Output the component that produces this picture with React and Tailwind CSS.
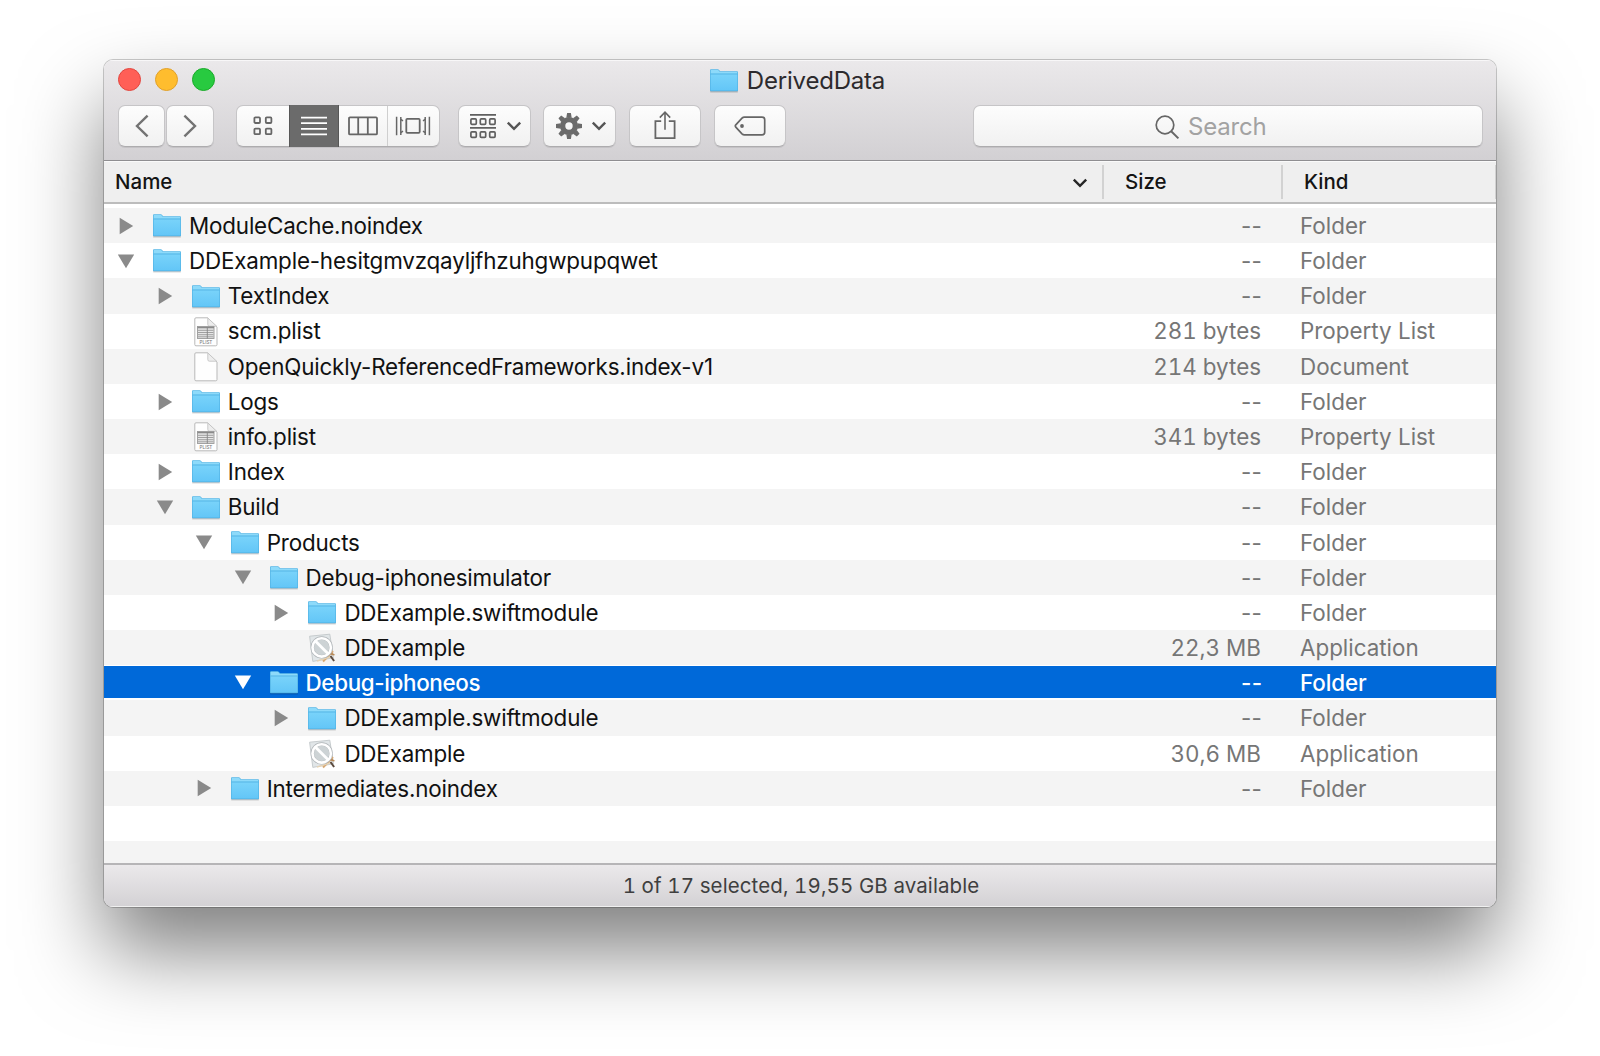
import React from 'react';
import clsx from 'clsx';

const ROWS = [
  { name: 'ModuleCache.noindex', depth: 0, type: 'folder', open: false },
  { name: 'DDExample-hesitgmvzqayljfhzuhgwpupqwet', depth: 0, type: 'folder', open: true },
  { name: 'TextIndex', depth: 1, type: 'folder', open: false },
  { name: 'scm.plist', depth: 1, type: 'plist', size: '281 bytes', kind: 'Property List' },
  { name: 'OpenQuickly-ReferencedFrameworks.index-v1', depth: 1, type: 'document', size: '214 bytes', kind: 'Document' },
  { name: 'Logs', depth: 1, type: 'folder', open: false },
  { name: 'info.plist', depth: 1, type: 'plist', size: '341 bytes', kind: 'Property List' },
  { name: 'Index', depth: 1, type: 'folder', open: false },
  { name: 'Build', depth: 1, type: 'folder', open: true },
  { name: 'Products', depth: 2, type: 'folder', open: true },
  { name: 'Debug-iphonesimulator', depth: 3, type: 'folder', open: true },
  { name: 'DDExample.swiftmodule', depth: 4, type: 'folder', open: false },
  { name: 'DDExample', depth: 4, type: 'app', size: '22,3 MB', kind: 'Application' },
  { name: 'Debug-iphoneos', depth: 3, type: 'folder', open: true, selected: true },
  { name: 'DDExample.swiftmodule', depth: 4, type: 'folder', open: false },
  { name: 'DDExample', depth: 4, type: 'app', size: '30,6 MB', kind: 'Application' },
  { name: 'Intermediates.noindex', depth: 2, type: 'folder', open: false },
];

const INDENT = 38.85;

const FolderIcon = () => (
  <svg width="30" height="26" viewBox="0 0 30 26" className="shrink-0">
    <defs>
      <linearGradient id="folder-front" x1="0" y1="0" x2="0" y2="1">
        <stop offset="0" stopColor="#79d3fa" />
        <stop offset="1" stopColor="#63c6f7" />
      </linearGradient>
    </defs>
    <path d="M1.2 23.6h27.6" stroke="#000" strokeOpacity="0.2" strokeWidth="1.6" />
    <path d="M1 2.2Q1 1.2 2 1.2h6.6q.8 0 1.3.6l.8.9q.5.5 1.2.5H28q1 0 1 1V22.5q0 .8-.8.8H1.8q-.8 0-.8-.8z" fill="#4fb0e2" />
    <path d="M1.6 2.4q0-.6.6-.6h6.3q.6 0 1 .5l.8.9q.5.6 1.3.6h16q.8 0 .8.8v1.2H1.6z" fill="#8ddafa" />
    <path d="M1.6 6.2h26.8v15.8q0 .5-.5.5H2.1q-.5 0-.5-.5z" fill="url(#folder-front)" />
    <path d="M1.5 5.9h27" stroke="#5cbbea" strokeWidth="0.8" />
  </svg>
);

const Page = ({ children }) => (
  <svg width="30" height="30" viewBox="0 0 30 30" className="shrink-0">
    <path d="M5 .8h11.8L26 10v17.6q0 1.2-1.2 1.2H5q-1.2 0-1.2-1.2V2Q3.8.8 5 .8z" fill="#fefefe" stroke="#b9b9b9" />
    <path d="M16.8 1v6.6q0 1.6 1.6 1.6h7.3z" fill="#ededed" stroke="#c4c4c4" strokeWidth="0.9" />
    {children}
  </svg>
);

const PlistIcon = () => (
  <Page>
    <rect x="6.5" y="9.5" width="16.5" height="12" fill="#e6e6e6" stroke="#9a9a9a" strokeWidth="0.9" />
    <path d="M6.5 10.6h16.5" stroke="#8a8a8a" strokeWidth="1.4" />
    <path d="M7 13.3h15.5M7 15.5h15.5M7 17.7h15.5M7 19.8h15.5" stroke="#a0a0a0" strokeWidth="1" />
    <path d="M16.3 10v11.5" stroke="#868686" strokeWidth="0.9" />
    <text x="15" y="27.2" textAnchor="middle" fontSize="4.6" fontWeight="500" fontFamily="Inter, sans-serif" fill="#7e7e7e">PLIST</text>
  </Page>
);

const AppIcon = () => (
  <svg width="30" height="30" viewBox="0 0 30 30" className="shrink-0">
    <path d="M2.6 3.2 22.8 1.2l3.6 23.6-20.6 3.6z" fill="#e1e6e8" stroke="#c2c7c9" strokeWidth="0.9" />
    <path d="M16 28.5 26 18" stroke="#d7a872" strokeWidth="2" />
    <path d="m10 28.2 14-4.5" stroke="#e6d3b4" strokeWidth="1.4" />
    <path d="m20.5 20.5 4.7-.7 3 2.2-2 .6" fill="#b98b5a" />
    <path d="m23.5 23 3.6 5" stroke="#5b4a3e" strokeWidth="2" />
    <circle cx="14.7" cy="14.4" r="9.4" fill="#c6cccf" fillOpacity="0.75" stroke="#b0b5b8" strokeWidth="3.4" />
    <circle cx="14.7" cy="14.4" r="9.2" fill="none" stroke="#fff" strokeWidth="2.6" />
    <path d="m8.3 8 12.8 12.8" stroke="#fff" strokeWidth="2.8" />
  </svg>
);

const ICONS = {
  folder: FolderIcon,
  plist: PlistIcon,
  document: Page,
  app: AppIcon,
};

const Disclosure = ({ open }) => (
  <svg width="18" height="18" viewBox="0 0 18 18" fill="currentColor" className="-mt-px">
    {open ? <path d="M.8 2.6h16.4L9 16.2z" /> : <path d="M2.7 .8 16.2 9 2.7 17.2z" />}
  </svg>
);

const Chevron = ({ className, width = 2.4 }) => (
  <svg width="16" height="10" viewBox="0 0 16 10" fill="none" stroke="currentColor" strokeWidth={width} className={className}>
    <path d="M1.8 1.6 8 7.8l6.2-6.2" />
  </svg>
);

const Gear = () => (
  <svg width="26" height="26" viewBox="-13 -13 26 26" fill="#6b6b6b">
    <circle r="6.4" fill="none" stroke="#6b6b6b" strokeWidth="5.4" />
    {[0, 45, 90, 135, 180, 225, 270, 315].map(angle => (
      <path key={angle} d="M-2.7-8.3-1.9-13h3.8l.8 4.7z" transform={`rotate(${angle})`} />
    ))}
  </svg>
);

const ToolButton = ({ className, children }) => (
  <button
    className={clsx(
      'flex h-[42px] shrink-0 items-center rounded-[7px] border border-[#c6c5c7] border-b-[#adacae] bg-linear-to-b from-[#fdfdfd] to-[#f1f1f1] shadow-[0_1px_0_rgba(0,0,0,0.08)]',
      className
    )}
  >
    {children}
  </button>
);

const ViewSwitcher = () => (
  <div className="ml-[22px] flex h-[42px] w-[204px] shrink-0 rounded-[7px] border border-[#c6c5c7] border-b-[#adacae] bg-linear-to-b from-[#fdfdfd] to-[#f1f1f1] text-[#666] shadow-[0_1px_0_rgba(0,0,0,0.08)]">
    <div className="flex w-[52px] items-center justify-center">
      <svg width="20" height="20" viewBox="0 0 20 20" fill="none" stroke="currentColor" strokeWidth="1.8">
        <rect x="1.4" y="1.4" width="5.6" height="5.6" rx="1" />
        <rect x="12.8" y="1.4" width="5.6" height="5.6" rx="1" />
        <rect x="1.4" y="12.6" width="5.6" height="5.6" rx="1" />
        <rect x="12.8" y="12.6" width="5.6" height="5.6" rx="1" />
      </svg>
    </div>
    <div className="-my-px flex w-[50px] items-center justify-center border-x border-[#575757] bg-[#6b6b6b]">
      <svg width="26" height="20" viewBox="0 0 26 20" stroke="#fff" strokeWidth="1.8" className="-ml-px">
        <path d="M0 1.6h26M0 7.1h26M0 12.8h26M0 18.3h26" />
      </svg>
    </div>
    <div className="flex w-[49px] items-center justify-center border-r border-[#cfcfcf]">
      <svg width="30" height="20" viewBox="0 0 30 20" fill="none" stroke="currentColor" strokeWidth="1.8">
        <rect x="1" y="1.4" width="28" height="17" rx="1" />
        <path d="M10.2 1.4v17M19.8 1.4v17" />
      </svg>
    </div>
    <div className="flex flex-1 items-center justify-center">
      <svg width="36" height="20" viewBox="0 0 36 20" fill="none" stroke="currentColor" strokeWidth="1.5" className="-ml-0.5">
        <rect x="11.3" y="2.8" width="13.4" height="14" rx="1" strokeWidth="1.8" />
        <path d="M1.6.8v18.4M34.4.8v18.4M5.8 1v18M30.2 1v18" />
        <path d="M5.8 3.4 8 4.8M5.8 16.6 8 15.2M30.2 3.4 28 4.8M30.2 16.6 28 15.2" strokeWidth="1.5" />
      </svg>
    </div>
  </div>
);

const Toolbar = () => (
  <div className="mt-[11px] flex items-center pl-3.5 pr-[13px]">
    <ToolButton className="w-[47px] justify-center">
      <svg width="14" height="24" viewBox="0 0 14 24" fill="none" stroke="#737373" strokeWidth="2.4">
        <path d="M12.6 1.6 2 12l10.6 10.4" />
      </svg>
    </ToolButton>
    <ToolButton className="ml-px w-12 justify-center">
      <svg width="14" height="24" viewBox="0 0 14 24" fill="none" stroke="#737373" strokeWidth="2.4">
        <path d="M1.4 1.6 12 12 1.4 22.4" />
      </svg>
    </ToolButton>

    <ViewSwitcher />

    <ToolButton className="ml-[18px] w-[73px] pl-[11px] text-[#5f5f5f]">
      <svg width="26" height="26" viewBox="0 0 26 26" fill="none" stroke="currentColor" strokeWidth="1.7">
        <path d="M0 1.9h26M0 14.9h26" />
        <rect x=".9" y="5.9" width="5.4" height="5.4" rx="1" />
        <rect x="10.3" y="5.9" width="5.4" height="5.4" rx="1" />
        <rect x="19.7" y="5.9" width="5.4" height="5.4" rx="1" />
        <rect x=".9" y="18.9" width="5.4" height="5.4" rx="1" />
        <rect x="10.3" y="18.9" width="5.4" height="5.4" rx="1" />
        <rect x="19.7" y="18.9" width="5.4" height="5.4" rx="1" />
      </svg>
      <Chevron className="ml-[9.5px] text-[#555]" />
    </ToolButton>
    <ToolButton className="ml-3 w-[73px] pl-[11.5px]">
      <Gear />
      <Chevron className="ml-[9.5px] text-[#555]" />
    </ToolButton>
    <ToolButton className="ml-[13px] w-[72px] justify-center">
      <svg width="22" height="30" viewBox="0 0 22 30" fill="none" stroke="#666" strokeWidth="1.8" className="-mt-0.5">
        <path d="M7.2 11.2H1.4v17h19.2v-17h-5.8" />
        <path d="M11 19.8V2.4M5.8 7.6 11 2.2l5.2 5.4" strokeWidth="1.6" />
      </svg>
    </ToolButton>
    <ToolButton className="ml-[13px] w-[72px] justify-center">
      <svg width="32" height="20" viewBox="0 0 32 20" fill="none" stroke="#666" strokeWidth="1.7">
        <path d="M10.5 1.2h17.6q2.6 0 2.6 2.6v12.4q0 2.6-2.6 2.6H10.5q-1.5 0-2.5-1L1.8 11.2q-1-1.2 0-2.4L8 2.2q1-1 2.5-1z" />
        <circle cx="8" cy="10" r="1.9" fill="#666" stroke="none" />
      </svg>
    </ToolButton>

    <div className="ml-auto flex h-[42px] w-[510px] items-center rounded-[7px] border border-[#c6c5c7] border-b-[#adacae] bg-linear-to-b from-[#fdfdfd] to-[#f1f1f1] pl-[181px] shadow-[0_1px_0_rgba(0,0,0,0.08)]">
      <svg width="25" height="25" viewBox="0 0 25 25" fill="none" stroke="#666" strokeWidth="1.7" className="mt-0.5">
        <circle cx="10" cy="10" r="8.8" />
        <path d="m16.2 16.2 7.2 7.2" strokeWidth="2" />
      </svg>
      <span className="ml-2 pt-0.5 text-[24px] leading-none tracking-[-0.2px] text-[#a2a2a2]">Search</span>
    </div>
  </div>
);

const TitleBar = () => (
  <header className="h-[101px] shrink-0 border-b border-[#8f8e91] bg-linear-to-b from-[#ebe9eb] to-[#d2d0d3] shadow-[inset_0_1px_0_#f8f7f8]">
    <div className="grid h-[34px] grid-cols-[1fr_auto_1fr] items-end">
      <div className="flex gap-[14px] pl-3.5 pb-[3px]">
        <span className="size-[23px] rounded-full border border-[#e2463f] bg-[#ff5f57]" />
        <span className="size-[23px] rounded-full border border-[#e0a02b] bg-[#ffbd2e]" />
        <span className="size-[23px] rounded-full border border-[#1aab29] bg-[#28ca40]" />
      </div>
      <div className="-mb-px flex items-center gap-2 pr-1.5">
        <FolderIcon />
        <h1 className="text-[24px] leading-7 tracking-[-0.2px] text-[#2c2a2d]">DerivedData</h1>
      </div>
    </div>
    <Toolbar />
  </header>
);

const ColumnHeader = () => (
  <div className="flex h-[43px] shrink-0 items-center border-b-2 border-[#bcbcbc] bg-[#efefef] text-[20.5px] font-medium leading-none text-[#141414] shadow-[inset_0_1px_0_#fafafa]">
    <div className="flex w-[998px] items-center justify-between pl-[11px] pr-[14px] pt-0.5">
      <span>Name</span>
      <Chevron className="text-[#262626]" />
    </div>
    <div className="flex h-[34px] w-[179px] items-center border-l-2 border-[#d2d2d2] pl-[21px] pt-0.5">Size</div>
    <div className="flex h-[34px] flex-1 items-center border-l-2 border-r border-[#d2d2d2] pl-[21px] pt-0.5">Kind</div>
  </div>
);

const FileRow = ({ row, striped }) => {
  const Icon = ICONS[row.type];
  return (
    <div
      className={clsx(
        'flex h-[35.18px] items-center whitespace-nowrap pt-[1.2px] text-[22.4px] leading-none',
        row.selected
          ? 'border-t border-b-2 border-white bg-[#0069d9] bg-clip-padding font-medium text-white'
          : striped
            ? 'bg-[#f4f4f4]'
            : 'bg-white'
      )}
    >
      <div className="flex w-[996px] items-center pl-[13px]">
        <div className="flex items-center" style={{ marginLeft: row.depth * INDENT }}>
          <span className={clsx('w-[35px]', row.selected ? 'text-white' : 'text-[#8a8a8a]')}>
            {row.type === 'folder' && <Disclosure open={row.open} />}
          </span>
          <Icon />
          <span
            className={clsx(
              'ml-[7px]',
              row.selected ? 'tracking-[-0.35px] text-white' : 'tracking-[-0.18px] text-[#111]'
            )}
          >
            {row.name}
          </span>
        </div>
      </div>
      {row.size ? (
        <div className="w-[161px] text-right tabular-nums text-[#767676]">{row.size}</div>
      ) : (
        <div className={clsx('w-[161px] pl-[141px] tracking-[0.3px]', row.selected ? 'text-white' : 'text-[#767676]')}>--</div>
      )}
      <div className={clsx('pl-[39px]', row.selected ? 'tracking-[-0.1px] text-white' : 'text-[#767676]')}>{row.kind || 'Folder'}</div>
    </div>
  );
};

export function App() {
  return (
    <div className="h-[1056px] w-[1600px] overflow-hidden bg-white pl-[104px] pt-[60px] font-['Inter',sans-serif]">
      <main className="flex h-[847px] w-[1392px] flex-col overflow-hidden rounded-[9px] bg-white shadow-[0_0_0_1px_rgba(0,0,0,0.2),0_44px_82px_rgba(0,0,0,0.5)]">
        <TitleBar />
        <ColumnHeader />
        <section className="min-h-0 flex-1 overflow-hidden pt-1">
          {ROWS.map((row, i) => (
            <FileRow key={i} row={row} striped={i % 2 === 0} />
          ))}
          <div className="h-[35.18px]" />
          <div className="h-[35.18px] bg-[#f4f4f4]" />
        </section>
        <footer className="flex h-[44px] shrink-0 items-center justify-center border-t-2 border-[#b6b5b7] bg-linear-to-b from-[#ebe9eb] to-[#d3d1d4] pl-0.5 text-[20.5px] leading-none tracking-[0.1px] tabular-nums text-[#3f3f3f] shadow-[inset_0_-1px_0_#f0f0f0]">
          1 of 17 selected, 19,55 GB available
        </footer>
      </main>
    </div>
  );
}

export default App;
